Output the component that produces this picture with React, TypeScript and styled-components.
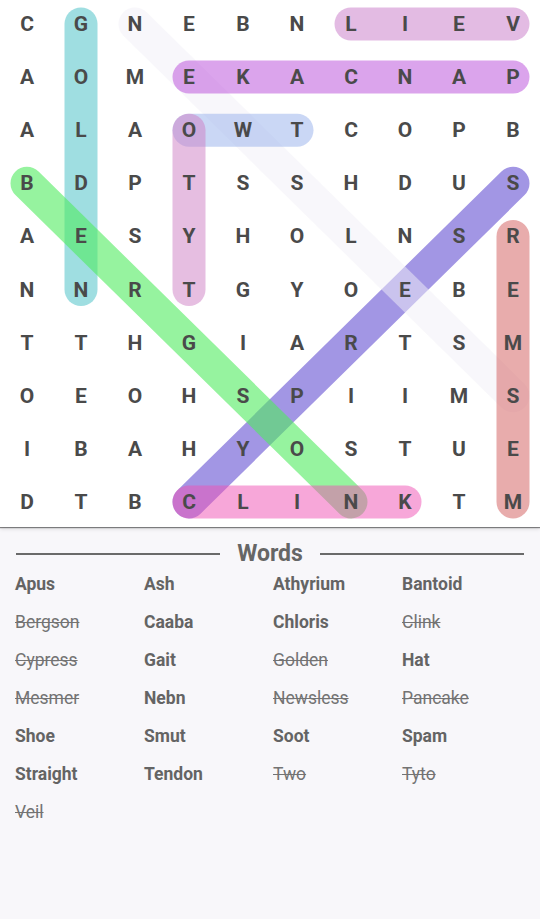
import React from 'react'
import styled, { createGlobalStyle } from 'styled-components'

const GlobalStyle = createGlobalStyle`
  html, body {
    margin: 0;
    padding: 0;
    background: #f8f7fa;
    font-family: Roboto, "Liberation Sans", sans-serif;
  }
`

const ROWS = [
  'CGNEBNLIEV',
  'AOMEKACNAP',
  'ALAOWTCOPB',
  'BDPTSSHDUS',
  'AESYHOLNSR',
  'NNRTGYOEBE',
  'TTHGIARTSM',
  'OEOHSPIIMS',
  'IBAHYOSTUE',
  'DTBCLINKTM',
]

const CELL_W = 54
const CELL_H = 53.1

type Band = { from: [number, number]; to: [number, number]; color: string }

// [col, row] of first and last letter
const bands: Band[] = [
  { from: [9, 3], to: [3, 9], color: 'rgba(100, 80, 210, 0.6)' },
  { from: [2, 0], to: [9, 7], color: 'rgba(242, 240, 248, 0.5)' },
  { from: [1, 0], to: [1, 5], color: 'rgba(80, 195, 200, 0.55)' },
  { from: [6, 0], to: [9, 0], color: 'rgba(200, 120, 200, 0.5)' },
  { from: [3, 1], to: [9, 1], color: 'rgba(190, 90, 220, 0.55)' },
  { from: [3, 2], to: [5, 2], color: 'rgba(150, 175, 235, 0.5)' },
  { from: [3, 2], to: [3, 5], color: 'rgba(205, 125, 195, 0.5)' },
  { from: [0, 3], to: [6, 9], color: 'rgba(80, 235, 95, 0.6)' },
  { from: [9, 4], to: [9, 9], color: 'rgba(210, 90, 90, 0.5)' },
  { from: [3, 9], to: [7, 9], color: 'rgba(240, 80, 180, 0.5)' },
]

const words: { text: string; found?: boolean }[] = [
  { text: 'Apus' }, { text: 'Ash' }, { text: 'Athyrium' }, { text: 'Bantoid' },
  { text: 'Bergson', found: true }, { text: 'Caaba' }, { text: 'Chloris' }, { text: 'Clink', found: true },
  { text: 'Cypress', found: true }, { text: 'Gait' }, { text: 'Golden', found: true }, { text: 'Hat' },
  { text: 'Mesmer', found: true }, { text: 'Nebn' }, { text: 'Newsless', found: true }, { text: 'Pancake', found: true },
  { text: 'Shoe' }, { text: 'Smut' }, { text: 'Soot' }, { text: 'Spam' },
  { text: 'Straight' }, { text: 'Tendon' }, { text: 'Two', found: true }, { text: 'Tyto', found: true },
  { text: 'Veil', found: true },
]

const Page = styled.div`
  width: 540px;
  min-height: 919px;
  display: flex;
  flex-direction: column;
  background: #f8f7fa;
`

const Board = styled.div`
  position: relative;
  height: 527px;
  background: #ffffff;
  overflow: hidden;
  box-shadow: 0 1px 1px rgba(0, 0, 0, 0.45), 0 2px 4px rgba(0, 0, 0, 0.12);
  z-index: 1;
`

const Bands = styled.svg`
  position: absolute;
  top: 0;
  left: 0;
`

const LetterGrid = styled.div`
  position: relative;
  display: grid;
  grid-template-columns: repeat(10, ${CELL_W}px);
  grid-template-rows: repeat(10, ${CELL_H}px);
`

const Letter = styled.div`
  display: flex;
  align-items: center;
  justify-content: center;
  padding-bottom: 5px;
  font-size: 21px;
  font-weight: 700;
  color: #4a4a4a;
`

const Panel = styled.div`
  flex: 1;
  padding: 16px 15px 0;
`

const Header = styled.div`
  display: flex;
  align-items: center;
  gap: 17px;
  height: 22px;
  padding: 0 1px;
`

const Rule = styled.div`
  flex: 1;
  height: 2px;
  background: #6a6a6a;
`

const HeaderTitle = styled.div`
  font-size: 23px;
  font-weight: 700;
  color: #666666;
  line-height: 22px;
`

const WordList = styled.div`
  display: grid;
  grid-template-columns: repeat(4, 129px);
  grid-auto-rows: 38px;
`

const Word = styled.div<{ $found?: boolean }>`
  display: flex;
  align-items: center;
  font-size: 17.5px;
  font-weight: ${(p) => (p.$found ? 400 : 700)};
  color: ${(p) => (p.$found ? '#737373' : '#646464')};
  text-decoration: ${(p) => (p.$found ? 'line-through' : 'none')};
`

const center = (col: number, row: number) => ({
  x: CELL_W / 2 + col * CELL_W,
  y: 24 + row * CELL_H,
})

export default function App() {
  return (
    <Page>
      <GlobalStyle />
      <Board>
        <Bands width={540} height={527}>
          {bands.map((b, i) => {
            const a = center(b.from[0], b.from[1])
            const z = center(b.to[0], b.to[1])
            return (
              <line
                key={i}
                x1={a.x}
                y1={a.y}
                x2={z.x}
                y2={z.y}
                stroke={b.color}
                strokeWidth={33}
                strokeLinecap="round"
              />
            )
          })}
        </Bands>
        <LetterGrid>
          {ROWS.flatMap((row, r) =>
            row.split('').map((ch, c) => <Letter key={`${r}-${c}`}>{ch}</Letter>)
          )}
        </LetterGrid>
      </Board>
      <Panel>
        <Header>
          <Rule />
          <HeaderTitle>Words</HeaderTitle>
          <Rule />
        </Header>
        <WordList>
          {words.map((w) => (
            <Word key={w.text} $found={w.found}>
              {w.text}
            </Word>
          ))}
        </WordList>
      </Panel>
    </Page>
  )
}
